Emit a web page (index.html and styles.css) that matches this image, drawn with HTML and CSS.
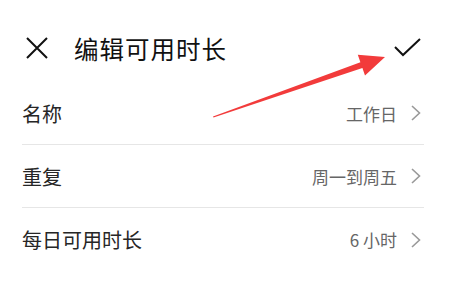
FILE: index.html
```html
<!DOCTYPE html>
<html lang="zh">
<head>
<meta charset="utf-8">
<link rel="stylesheet" href="styles.css">
</head>
<body>
<div class="page">
  <header class="header">
    <svg class="icon-close" width="22" height="22" viewBox="0 0 22 22"><path d="M1 1L21 21M21 1L1 21" stroke="#111" stroke-width="2" fill="none"/></svg>
    <h1 class="title">编辑可用时长</h1>
    <svg class="icon-check" width="30" height="22" viewBox="0 0 30 22"><path d="M2 10L10 18L27 2" stroke="#111" stroke-width="2" fill="none"/></svg>
  </header>
  <ul class="list">
    <li class="row"><span class="label">名称</span><span class="value">工作日</span><svg class="chev" width="10" height="16" viewBox="0 0 10 16"><path d="M1 1L8.5 8L1 15" stroke="#999" stroke-width="1.6" fill="none"/></svg></li>
    <li class="row"><span class="label">重复</span><span class="value">周一到周五</span><svg class="chev" width="10" height="16" viewBox="0 0 10 16"><path d="M1 1L8.5 8L1 15" stroke="#999" stroke-width="1.6" fill="none"/></svg></li>
    <li class="row last"><span class="label">每日可用时长</span><span class="value">6 小时</span><svg class="chev" width="10" height="16" viewBox="0 0 10 16"><path d="M1 1L8.5 8L1 15" stroke="#999" stroke-width="1.6" fill="none"/></svg></li>
  </ul>
  <svg class="arrow" width="450" height="290" viewBox="0 0 450 290"><polygon points="213,116.5 360.4,62.3 357.8,54.7 385,57 365,75.5 362.4,67.9 213.5,117.5" fill="#f23b3b"/></svg>
</div>
</body>
</html>
```
FILE: styles.css
```css
html, body {
  margin: 0;
  padding: 0;
  background: #fff;
}
.page {
  position: relative;
  width: 450px;
  height: 290px;
  overflow: hidden;
  font-family: "Noto Sans CJK SC", "Noto Sans", sans-serif;
}
.header {
  display: flex;
  align-items: center;
  height: 68px;
  padding: 14px 0 0 0;
}
.icon-close {
  margin-left: 26px;
  flex: none;
}
.title {
  margin: 0 0 0 26px;
  font-size: 24.5px;
  font-weight: 400;
  color: #111;
  letter-spacing: 1px;
  flex: 1;
}
.icon-check {
  margin-right: 27px;
  flex: none;
}
.list {
  list-style: none;
  margin: 0 26px 0 22px;
  padding: 0;
}
.row {
  display: flex;
  align-items: center;
  height: 63px;
  border-bottom: 1px solid #e6e6e6;
  box-sizing: border-box;
}
.row.last {
  border-bottom: none;
}
.label {
  flex: 1;
  font-size: 20px;
  color: #262626;
}
.value {
  font-size: 17px;
  color: #666;
  margin-right: 14px;
}
.chev {
  margin-right: 3px;
}
.arrow {
  position: absolute;
  left: 0;
  top: 0;
  pointer-events: none;
}
```
